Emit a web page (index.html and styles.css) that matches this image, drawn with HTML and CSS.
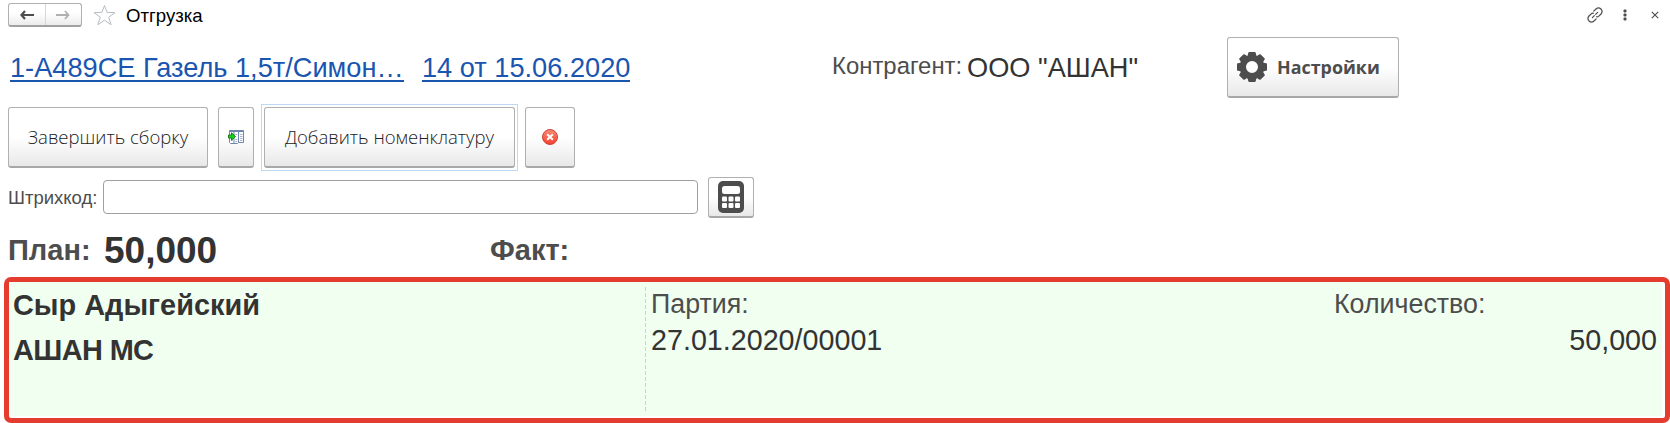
FILE: index.html
```html
<!DOCTYPE html>
<html lang="ru">
<head>
<meta charset="utf-8">
<title>Отгрузка</title>
<link rel="stylesheet" href="styles.css">
</head>
<body>
<header class="titlebar">
  <div class="nav">
    <button class="nav-btn" aria-label="Назад"><svg width="14" height="10" viewBox="0 0 14 10"><path d="M5 1L1.500 5L5 9M2 5H14" fill="none" stroke="#4d4d4d" stroke-width="2.200"/></svg></button>
    <button class="nav-btn" aria-label="Вперёд"><svg width="14" height="10" viewBox="0 0 14 10"><path d="M9 1L12.500 5L9 9M12 5H0" fill="none" stroke="#b0b0b0" stroke-width="1.800"/></svg></button>
  </div>
  <svg class="star" width="23" height="22" viewBox="0 0 23 22"><path d="M11.500 1.500L14.100 8.400L22 8.600L15.700 13.200L18.100 20.700L11.500 16.200L4.900 20.700L7.300 13.200L1 8.600L8.900 8.400Z" fill="none" stroke="#b9bcc2" stroke-width="1"/></svg>
  <h1 class="title">Отгрузка</h1>
  <div class="tools">
    <svg width="16" height="16" viewBox="0 0 16 16" fill="none" stroke="#4d4d4d" stroke-width="1.200" stroke-linecap="round"><path d="M6.800 4.200L9 2Q11.500-.2 13.900 2Q16.200 4.500 14 7L11.800 9.200M9.200 11.800L7 14Q4.500 16.200 2.100 14Q-.2 11.500 2 9L4.200 6.800M5.400 10.600L7.300 8.700M8.700 7.300L10.600 5.400M11.800 9.200Q10.800 10.200 9.500 9.800M4.200 6.800Q5.200 5.800 6.500 6.200"/></svg>
    <svg width="4" height="12" viewBox="0 0 4 12" fill="#4d4d4d"><rect x=".5" y="0.500" width="3" height="3" rx="1"/><rect x=".5" y="4.500" width="3" height="3" rx="1"/><rect x=".5" y="8.500" width="3" height="3" rx="1"/></svg>
    <svg class="close" width="8" height="8" viewBox="0 0 8 8"><path d="M.8.8L7.200 7.200M7.200.8L.8 7.200" stroke="#4d4d4d" stroke-width="1.100"/></svg>
  </div>
</header>

<section class="document">
  <a class="link route">1-А489СЕ Газель 1,5т/Симон…</a>
  <a class="link order">14 от 15.06.2020</a>
  <span class="party-label">Контрагент:</span>
  <span class="party">ООО "АШАН"</span>
  <button class="btn settings">
    <svg width="30" height="30" viewBox="-15 -15 30 30"><g fill="#4d4d4d"><path fill-rule="evenodd" d="M0-12.300A12.300 12.300 0 1 1 0 12.300A12.300 12.300 0 1 1 0-12.300ZM0-6A6 6 0 1 0 0 6A6 6 0 1 0 0-6Z"/><path id="tooth" d="M-4.500-10.500L-3.700-14.200Q-3.500-15-2.700-15H2.700Q3.500-15 3.700-14.200L4.500-10.500Z"/><use href="#tooth" transform="rotate(45)"/><use href="#tooth" transform="rotate(90)"/><use href="#tooth" transform="rotate(135)"/><use href="#tooth" transform="rotate(180)"/><use href="#tooth" transform="rotate(225)"/><use href="#tooth" transform="rotate(270)"/><use href="#tooth" transform="rotate(315)"/></g></svg>
    <span>Настройки</span>
  </button>
</section>

<section class="actions">
  <button class="btn finish">Завершить сборку</button>
  <button class="btn fill" aria-label="Заполнить"><svg width="16" height="14" viewBox="0 0 16 14"><path d="M1.500.5H15.500V12.500H10.500L9.500 13.500H2.500L1.500 12.500Z" fill="#fff" stroke="#6f86ad"/><path d="M1.500 1.500H15M6 1V13M10.500 1V13" stroke="#6f86ad"/><path d="M12 4.500H14.500M12 6.500H14.500M12 8.500H14.500M12 10.500H14.500M7.300 4.500H9.300M7.300 9.500H9.300M7.300 11.500H9.300M3 10.500H4.800M3 3.500H4" stroke="#a3b4d0"/><path d="M.5 5H3.500V2.800L7.500 6.500L3.500 10.200V8H.5Z" fill="#14d414" stroke="#17701a" stroke-width=".9"/></svg></button>
  <button class="btn add">Добавить номенклатуру</button>
  <button class="btn remove" aria-label="Удалить"><svg width="16" height="16" viewBox="0 0 16 16"><defs><linearGradient id="red" x2="0" y2="1"><stop stop-color="#f98a76"/><stop offset="1" stop-color="#f7402c"/></linearGradient></defs><circle cx="8" cy="8" r="7.500" fill="url(#red)" stroke="#c9463a"/><path d="M5.200 5.200L10.800 10.800M10.800 5.200L5.200 10.800" stroke="#fff" stroke-width="2"/></svg></button>
</section>

<section class="barcode">
  <label class="barcode-label" for="code">Штрихкод:</label>
  <input class="barcode-input" id="code" type="text">
  <button class="btn calc" aria-label="Калькулятор"><svg width="26" height="32" viewBox="0 0 26 32"><rect width="26" height="32" rx="5" fill="#4d4d4d"/><g fill="#fff"><rect x="4" y="5" width="18" height="8" rx="2.500"/><rect x="4" y="15.500" width="5" height="5" rx="1"/><rect x="10.500" y="15.500" width="5" height="5" rx="1"/><rect x="17" y="15.500" width="5" height="5" rx="1"/><rect x="4" y="22" width="5" height="5" rx="1"/><rect x="10.500" y="22" width="5" height="5" rx="1"/><rect x="17" y="22" width="5" height="5" rx="1"/></g></svg></button>
</section>

<section class="totals">
  <span class="total-label plan-label">План:</span>
  <span class="total-value">50,000</span>
  <span class="total-label fact-label">Факт:</span>
</section>

<main class="frame">
  <div class="row">
    <div class="product">
      <div class="name">Сыр Адыгейский</div>
      <div class="name owner">АШАН МС</div>
    </div>
    <svg class="divider" width="1" height="124" viewBox="0 0 1 124"><path d="M.5 0V124" stroke="#c8d6c8" stroke-dasharray="4 2"/></svg>
    <div class="batch">
      <div class="caption">Партия:</div>
      <div class="value">27.01.2020/00001</div>
    </div>
    <div class="quantity">
      <div class="caption">Количество:</div>
      <div class="value">50,000</div>
    </div>
  </div>
</main>
</body>
</html>
```

FILE: styles.css
```css
* { box-sizing: border-box; }

body {
  margin: 0;
  width: 1670px;
  height: 423px;
  overflow: hidden;
  background: #fff;
  color: #333;
  font-family: "Liberation Sans", Arial, sans-serif;
  white-space: nowrap;
}

svg { display: block; flex: none; }

button {
  margin: 0;
  padding: 0;
  font-family: "Open Sans", "Noto Sans", sans-serif;
  color: #4d4d4d;
}

.titlebar {
  display: flex;
  align-items: center;
  height: 30px;
  padding-left: 8px;
}

.nav {
  display: flex;
  width: 74px;
  height: 24px;
  border: 1px solid #b0b0b0;
  border-bottom: 2px solid #a0a0a0;
  border-radius: 3px;
  background: linear-gradient(#fff 40%, #ececec);
}

.nav-btn {
  display: flex;
  flex: 1;
  align-items: center;
  justify-content: center;
  border: 0;
  background: none;
}

.nav-btn + .nav-btn { border-left: 1px solid #d8d8d8; }

.star { margin-left: 11px; }

.title {
  margin: 2px 0 0 10px;
  font-size: 18.600px;
  font-weight: 400;
  line-height: 22px;
  color: #000;
}

.tools {
  display: flex;
  align-items: center;
  gap: 20px;
  margin-left: auto;
  padding-right: 11px;
}

.close { margin-left: 4px; }

.document {
  display: flex;
  height: 77px;
  padding: 7px 0 0 10px;
}

.link {
  height: 38px;
  margin-top: 7px;
  border-bottom: 2px solid #1a55b0;
  color: #1a55b0;
  font-size: 27.200px;
  line-height: 47px;
}

.route { width: 394px; }
.order { width: 208px; margin-left: 18px; }

.party-label {
  width: 135px;
  margin: 14px 0 0 202px;
  color: #4d4d4d;
  font-size: 23.900px;
  line-height: 29px;
}

.party {
  width: 260px;
  margin-top: 14px;
  font-size: 27.200px;
  line-height: 33px;
}

.btn {
  display: flex;
  flex: none;
  align-items: center;
  justify-content: center;
  height: 61px;
  padding-bottom: 1px;
  border: 1px solid #b0b0b0;
  border-bottom: 2px solid #a8a8a8;
  border-radius: 3px;
  background: linear-gradient(#fff 50%, #e8e8e8);
  font-size: 18.500px;
}

.settings {
  justify-content: flex-start;
  gap: 10px;
  width: 172px;
  padding: 0 0 0 9px;
  font-size: 17.900px;
  font-weight: 700;
}

.actions {
  display: flex;
  gap: 10px;
  height: 70px;
  padding-left: 8px;
}

.finish { width: 200px; }
.fill { width: 36px; }
.add { position: relative; width: 251px; }
.remove { width: 50px; }

/* square focus ring around the default action */
.add::after {
  content: "";
  position: absolute;
  inset: -4px -4px -5px;
  border: 1px solid #bcdaf5;
}

.finish, .add { font-weight: 300; color: #222; }

.barcode {
  display: flex;
  height: 41px;
  padding-left: 8px;
}

.barcode-label {
  width: 95px;
  color: #4d4d4d;
  font-size: 18.500px;
  line-height: 41px;
}

.barcode-input {
  width: 595px;
  height: 34px;
  margin: 3px 0 0;
  border: 1px solid #a0a0a0;
  border-radius: 4px;
}

.calc { width: 46px; height: 41px; margin-left: 10px; }

.totals {
  display: flex;
  height: 59px;
  padding: 11px 0 0 8px;
  font-weight: 700;
}

.total-label { color: #4d4d4d; font-size: 29px; line-height: 42px; }
.plan-label { width: 96px; }
.total-value { width: 386px; font-size: 37px; line-height: 43px; }

.frame {
  width: 1666px;
  height: 146px;
  margin-left: 4px;
  border: 5px solid #e53c30;
  border-radius: 7px;
  padding: 0 3px 2px 0;
}

.row {
  display: flex;
  height: 134px;
  padding: 5px 5px 0 4px;
  background: #f0fff0;
}

.product { width: 632px; margin-top: -4px; }
.name { font-size: 28.900px; font-weight: 700; line-height: 45px; }
.owner { letter-spacing: -0.6px; }

.batch { width: 688px; padding-left: 5px; margin-top: -1px; }
.caption { color: #4d4d4d; font-size: 26.800px; line-height: 36px; }
.value { font-size: 28.700px; line-height: 36px; }

.quantity { flex: 1; margin-top: -1px; }
.quantity .value { text-align: right; }
```
